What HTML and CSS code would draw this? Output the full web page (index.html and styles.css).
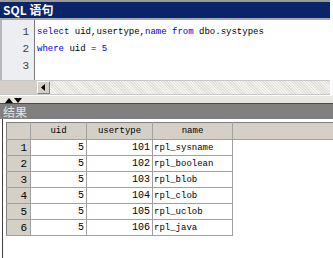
FILE: index.html
```html
<!DOCTYPE html>
<html lang="zh-CN">
<head>
  <meta charset="UTF-8" />
  <title>SQL 语句</title>
  <link rel="stylesheet" href="styles.css">
</head>
<body>

  <div class="pane">
    <div class="titlebar">SQL 语句</div>

    <div class="editor">
      <div class="gutter">
        <div>1</div>
        <div>2</div>
        <div>3</div>
      </div>
      <div class="code">
        <div class="line"><span class="kw">select</span> uid,usertype,<span class="kw">name</span> <span class="kw">from</span> dbo.systypes</div>
        <div class="line"><span class="kw">where</span> uid = <span class="kw">5</span></div>
        <div class="line">&nbsp;</div>
      </div>
    </div>

    <div class="hscroll">
      <div class="scroll-corner"></div>
      <div class="scroll-btn">
        <svg width="5" height="7" viewBox="0 0 5 7"><path d="M4 0 L0 3.5 L4 7 Z" fill="#000"/></svg>
      </div>
      <div class="scroll-track"></div>
    </div>
  </div>

  <div class="splitter">
    <svg width="22" height="6" viewBox="0 0 22 6">
      <path d="M1 6 L5 1 L9 6 Z" fill="#000"/>
      <path d="M10 1 L18 1 L14 6 Z" fill="#000"/>
    </svg>
  </div>

  <div class="results-title">结果</div>

  <div class="results">
    <table class="grid">
      <thead>
        <tr>
          <th class="rowhead"></th>
          <th class="c-uid">uid</th>
          <th class="c-type">usertype</th>
          <th class="c-name">name</th>
          <th class="filler"></th>
        </tr>
      </thead>
      <tbody>
        <tr><td class="rowhead">1</td><td class="num">5</td><td class="num">101</td><td>rpl_sysname</td><td class="filler"></td></tr>
        <tr><td class="rowhead">2</td><td class="num">5</td><td class="num">102</td><td>rpl_boolean</td><td class="filler"></td></tr>
        <tr><td class="rowhead">3</td><td class="num">5</td><td class="num">103</td><td>rpl_blob</td><td class="filler"></td></tr>
        <tr><td class="rowhead">4</td><td class="num">5</td><td class="num">104</td><td>rpl_clob</td><td class="filler"></td></tr>
        <tr><td class="rowhead">5</td><td class="num">5</td><td class="num">105</td><td>rpl_uclob</td><td class="filler"></td></tr>
        <tr><td class="rowhead">6</td><td class="num">5</td><td class="num">106</td><td>rpl_java</td><td class="filler"></td></tr>
      </tbody>
    </table>
  </div>

</body>
</html>
```

FILE: styles.css
```css
body {
  margin: 0;
  width: 333px;
  height: 258px;
  overflow: hidden;
  background: #fff;
  font-family: 'Liberation Mono', monospace;
}

.pane {
  width: 330px;
  border-top: 2px solid #9a9a9a;
}

.titlebar {
  height: 16px;
  line-height: 16px;
  padding-left: 3px;
  background: #0a246a;
  color: #fff;
  font-family: 'Noto Sans CJK SC', sans-serif;
  font-weight: bold;
  font-size: 12px;
  border-bottom: 2px solid #a8a8a8;
}

.editor {
  display: flex;
  height: 60px;
  background: #fff;
}

.gutter {
  width: 35px;
  background: #eceef2;
  border-left: 2px solid #b8b8b8;
  border-right: 1px solid #7a7a7a;
  box-sizing: border-box;
  padding: 4px 5px 0 0;
  text-align: right;
  font-size: 11px;
  line-height: 17px;
  color: #404040;
}

.code {
  padding: 4px 0 0 2px;
  font-size: 9px;
  line-height: 17px;
  color: #000;
}

.line {
  white-space: nowrap;
}

.kw {
  color: #0000e0;
}

.hscroll {
  display: flex;
  height: 13px;
  border-top: 1px solid #c8c8c8;
  border-bottom: 1px solid #c8c8c8;
}

.scroll-corner {
  width: 37px;
  background: #d4d0c8;
}

.scroll-btn {
  width: 13px;
  background: #d4d0c8;
  box-sizing: border-box;
  border: 1px solid;
  border-color: #fff #808080 #808080 #fff;
  display: flex;
  align-items: center;
  justify-content: center;
}

.scroll-track {
  flex: 1;
  background-color: #ebeae6;
  background-image: repeating-linear-gradient(45deg, #f4f3f0 0 1px, #e2e0da 1px 2px);
}

.splitter {
  height: 6px;
  padding: 1px 0 0 4px;
  background: #e9e7e2;
  border-top: 1px solid #fff;
}

.splitter svg {
  display: block;
}

.results-title {
  height: 15px;
  line-height: 15px;
  padding-left: 3px;
  background: #808080;
  border-top: 1px solid #4a4a4a;
  color: #e4e4e4;
  font-family: 'Noto Sans CJK SC', sans-serif;
  font-size: 12px;
}

.results {
  height: 140px;
  margin-left: 2px;
  border-left: 1px solid #404040;
  padding: 3px 0 0 3px;
  background: #fff;
}

.grid {
  border-collapse: collapse;
  border-left: 1px solid #808080;
  width: 328px;
  font-size: 9px;
  color: #000;
}

.grid th {
  height: 16px;
  padding: 0;
  background: #d4d0c8;
  font-weight: normal;
  border-top: 1px solid #808080;
  border-right: 1px solid #a0a0a0;
  border-bottom: 1px solid #a0a0a0;
}

.grid td {
  height: 15px;
  padding: 0 2px 0 1px;
  border-right: 1px solid #a0a0a0;
  border-bottom: 1px solid #a0a0a0;
  white-space: nowrap;
}

.grid .rowhead {
  width: 24px;
  background: #d4d0c8;
  text-align: right;
  padding-right: 3px;
  box-sizing: border-box;
  font-size: 11px;
}

.c-uid {
  width: 55px;
}

.c-type {
  width: 65px;
}

.c-name {
  width: 79px;
}

.grid .num {
  text-align: right;
  font-size: 10px;
}

.grid td.filler {
  border: none;
  background: #fff;
}

.grid th.filler {
  border-right: none;
}
```
